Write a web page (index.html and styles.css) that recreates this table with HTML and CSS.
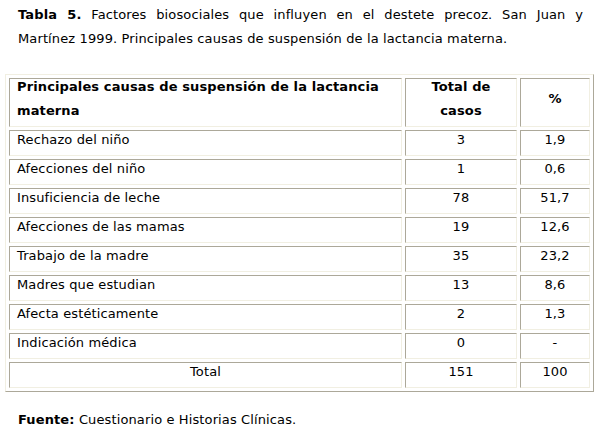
FILE: index.html
```html
<!DOCTYPE html>
<html lang="es">
<head>
<meta charset="utf-8">
<title>Tabla 5</title>
<link rel="stylesheet" href="styles.css">
</head>
<body>
<div class="page">
  <p class="caption"><span class="cap-first"><b>Tabla 5.</b> Factores biosociales que influyen en el destete precoz. San Juan y</span> Martínez 1999. Principales causas de suspensión de la lactancia materna.</p>
  <table class="data">
    <tr class="hd">
      <td class="c1"><div class="in">Principales causas de suspensión de la lactancia materna</div></td>
      <td class="c2 ctr"><div class="in">Total de<br>casos</div></td>
      <td class="c3 ctr pct"><div class="in">%</div></td>
    </tr>
    <tr><td>Rechazo del niño</td><td class="ctr">3</td><td class="ctr">1,9</td></tr>
    <tr><td>Afecciones del niño</td><td class="ctr">1</td><td class="ctr">0,6</td></tr>
    <tr><td>Insuficiencia de leche</td><td class="ctr">78</td><td class="ctr">51,7</td></tr>
    <tr><td>Afecciones de las mamas</td><td class="ctr">19</td><td class="ctr">12,6</td></tr>
    <tr><td>Trabajo de la madre</td><td class="ctr">35</td><td class="ctr">23,2</td></tr>
    <tr><td>Madres que estudian</td><td class="ctr">13</td><td class="ctr">8,6</td></tr>
    <tr><td>Afecta estéticamente</td><td class="ctr">2</td><td class="ctr">1,3</td></tr>
    <tr><td>Indicación médica</td><td class="ctr">0</td><td class="ctr">-</td></tr>
    <tr><td class="ctr">Total</td><td class="ctr">151</td><td class="ctr">100</td></tr>
  </table>
  <p class="source"><b>Fuente:</b> Cuestionario e Historias Clínicas.</p>
</div>
</body>
</html>
```
FILE: styles.css
```css
html, body {
  margin: 0;
  padding: 0;
  background: #ffffff;
}

body {
  font-family: Verdana, "DejaVu Sans", sans-serif;
  font-size: 13px;
  letter-spacing: 0.12px;
  color: #000000;
}

.page {
  padding-top: 3px;
}

.caption {
  margin: 0 17px 0 18px;
  line-height: 24px;
  text-align: justify;
}

.cap-first {
  display: block;
  text-align: justify;
  text-align-last: justify;
}

.data {
  margin: 23px 0 0 5px;
  width: 589px;
  table-layout: fixed;
  border-collapse: separate;
  border-spacing: 3px;
  border: 1px solid;
  border-color: #f1efe2 #aca899 #aca899 #f1efe2;
}

.data td {
  box-sizing: border-box;
  height: 26px;
  padding: 0 6px 0 7px;
  vertical-align: top;
  line-height: 17px;
  border: 1px solid;
  border-color: #aca899 #f1efe2 #f1efe2 #aca899;
}

.data .c1 { width: 393px; }
.data .c2 { width: 112px; }
.data .c3 { width: 70px; }

.data .ctr {
  text-align: center;
  padding-left: 2px;
  padding-right: 2px;
}

.data .hd td {
  height: 49px;
  line-height: 24px;
  font-weight: bold;
}

.hd .in {
  margin-top: -4px;
}

.hd .pct .in {
  margin-top: 8px;
}

.source {
  margin: 16px 0 0 18px;
  line-height: 24px;
}
```
